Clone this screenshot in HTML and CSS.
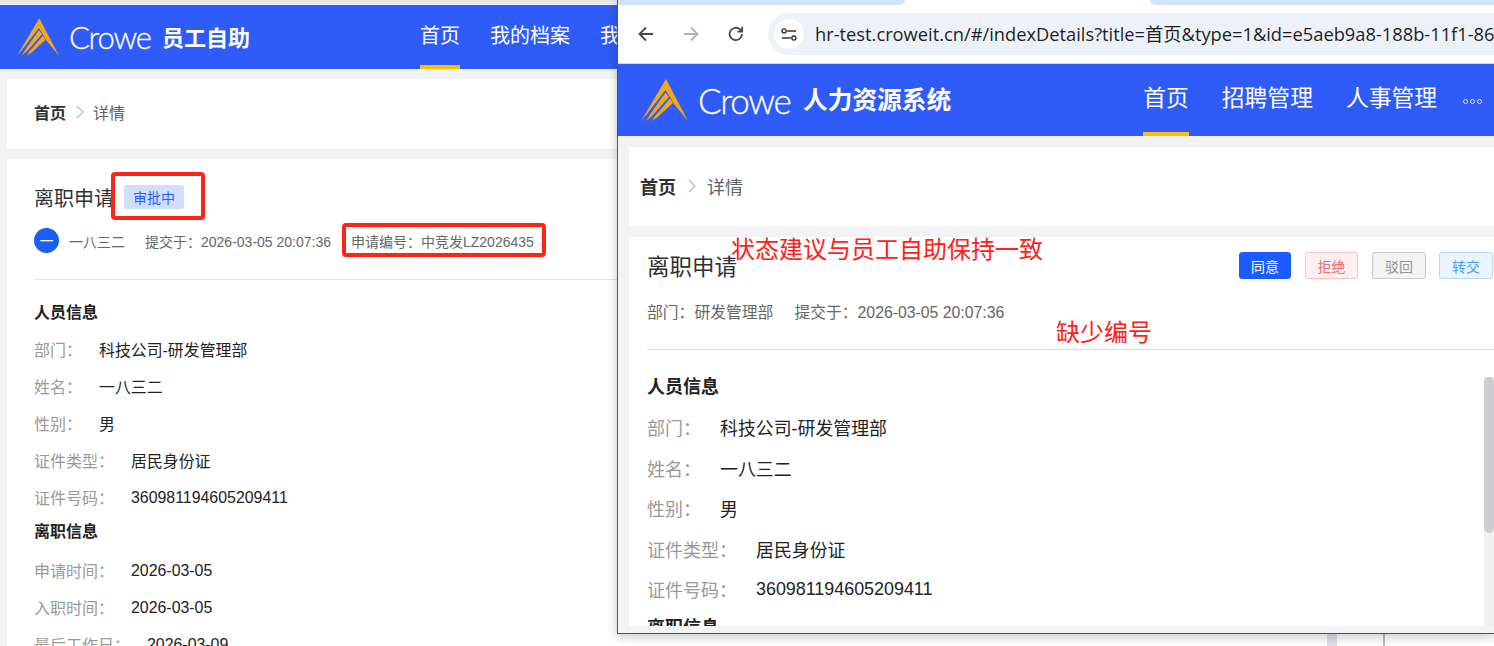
FILE: index.html
```html
<!DOCTYPE html>
<html lang="zh-CN">
<head>
<meta charset="utf-8">
<title>离职申请详情</title>
<link rel="stylesheet" href="styles.css">
</head>
<body>
<svg width="0" height="0" class="defs">
  <symbol id="crowe-mark" viewBox="0 0 47 42">
    <path fill="#f2a81d" d="M25 0 47 42 33 25 28 16.500 24.500 11 6 35 0 42Z"/>
    <path fill="#f2a81d" d="M24.500 13.500 28 18 11 37 5 42 9 35.500Z"/>
    <path fill="#f2a81d" d="M29 19.500 32 24 16 38.500 11 42 14 37Z"/>
  </symbol>
</svg>

<div class="desk">
  <section class="app">
    <div class="app-top"></div>
    <header class="nav">
      <div class="brand">
        <svg class="mark"><use href="#crowe-mark"/></svg>
        <span class="crowe">Crowe</span>
        <strong class="sys">员工自助</strong>
      </div>
      <nav class="menu">
        <a class="menu-item active">首页</a>
        <a class="menu-item">我的档案</a>
        <a class="menu-item">我的申请</a>
      </nav>
    </header>
    <main class="content">
      <div class="crumb-card">
        <b class="crumb-home">首页</b>
        <svg class="crumb-sep" viewBox="0 0 8 14"><path d="M1 1l6 6-6 6" fill="none" stroke="#b5b5b5" stroke-width="1.100"/></svg>
        <span class="crumb-cur">详情</span>
      </div>
      <article class="detail">
        <div class="title-row">
          <h1 class="title">离职申请</h1>
          <span class="badge">审批中</span>
        </div>
        <div class="meta-row">
          <span class="avatar">一</span>
          <span class="person">一八三二</span>
          <span class="meta">提交于：2026-03-05 20:07:36</span>
          <span class="meta">申请编号：中竞发LZ2026435</span>
        </div>
        <hr class="rule">
        <h2 class="sec">人员信息</h2>
        <div class="row"><span class="k">部门：</span><span class="v">科技公司-研发管理部</span></div>
        <div class="row"><span class="k">姓名：</span><span class="v">一八三二</span></div>
        <div class="row"><span class="k">性别：</span><span class="v">男</span></div>
        <div class="row"><span class="k">证件类型：</span><span class="v">居民身份证</span></div>
        <div class="row"><span class="k">证件号码：</span><span class="v">360981194605209411</span></div>
        <h2 class="sec sec-next">离职信息</h2>
        <div class="row"><span class="k">申请时间：</span><span class="v">2026-03-05</span></div>
        <div class="row"><span class="k">入职时间：</span><span class="v">2026-03-05</span></div>
        <div class="row"><span class="k">最后工作日：</span><span class="v">2026-03-09</span></div>
      </article>
    </main>
    <i class="mark-red mark-status"></i>
    <i class="mark-red mark-number"></i>
    <i class="peek-block"></i>
    <i class="peek-dash"></i>
  </section>

  <section class="window">
    <div class="tabstrip">
      <i class="tab tab-left"></i>
      <i class="tab tab-right"></i>
    </div>
    <div class="toolbar">
      <svg class="tb-icon" viewBox="0 0 20 20"><path d="M17 10H4M10 3.500 3.500 10l6.500 6.500" fill="none" stroke="#474747" stroke-width="1.800"/></svg>
      <svg class="tb-icon" viewBox="0 0 20 20"><path d="M3 10h13M10 3.500l6.500 6.500-6.500 6.500" fill="none" stroke="#b0b0b0" stroke-width="1.800"/></svg>
      <svg class="tb-icon" viewBox="0 0 20 20"><path d="M16 10a6.200 6.200 0 1 1-1.900-4.500L16 7.300M16.200 2.800v4.800h-4.800" fill="none" stroke="#474747" stroke-width="1.800"/></svg>
      <div class="omnibox">
        <span class="site-chip">
          <svg class="site-icon" viewBox="0 0 18 16"><path d="M7 4h10M1 12h10" fill="none" stroke="#333" stroke-width="1.700"/><circle cx="3.500" cy="4" r="2.300" fill="none" stroke="#333" stroke-width="1.600"/><circle cx="14.500" cy="12" r="2.300" fill="none" stroke="#333" stroke-width="1.600"/></svg>
        </span>
        <span class="url">hr-test.croweit.cn/#/indexDetails?title=首页&amp;type=1&amp;id=e5aeb9a8-188b-11f1-86</span>
      </div>
    </div>
    <header class="nav nav-lg">
      <div class="brand">
        <svg class="mark"><use href="#crowe-mark"/></svg>
        <span class="crowe">Crowe</span>
        <strong class="sys">人力资源系统</strong>
      </div>
      <nav class="menu">
        <a class="menu-item active">首页</a>
        <a class="menu-item">招聘管理</a>
        <a class="menu-item">人事管理</a>
        <span class="more"><i></i><i></i><i></i></span>
      </nav>
    </header>
    <main class="content content-lg">
      <div class="crumb-card">
        <b class="crumb-home">首页</b>
        <svg class="crumb-sep" viewBox="0 0 8 14"><path d="M1 1l6 6-6 6" fill="none" stroke="#b5b5b5" stroke-width="1.100"/></svg>
        <span class="crumb-cur">详情</span>
      </div>
      <article class="detail">
        <div class="title-row">
          <h1 class="title">离职申请</h1>
          <div class="actions">
            <button class="btn btn-ok">同意</button>
            <button class="btn btn-no">拒绝</button>
            <button class="btn btn-back">驳回</button>
            <button class="btn btn-pass">转交</button>
          </div>
        </div>
        <div class="meta-row">
          <span class="meta">部门：研发管理部</span>
          <span class="meta">提交于：2026-03-05 20:07:36</span>
        </div>
        <hr class="rule">
        <h2 class="sec">人员信息</h2>
        <div class="row"><span class="k">部门：</span><span class="v">科技公司-研发管理部</span></div>
        <div class="row"><span class="k">姓名：</span><span class="v">一八三二</span></div>
        <div class="row"><span class="k">性别：</span><span class="v">男</span></div>
        <div class="row"><span class="k">证件类型：</span><span class="v">居民身份证</span></div>
        <div class="row"><span class="k">证件号码：</span><span class="v">360981194605209411</span></div>
        <h2 class="sec sec-next">离职信息</h2>
        <div class="scrollbar"><i></i></div>
      </article>
    </main>
  </section>

  <p class="note note-status">状态建议与员工自助保持一致</p>
  <p class="note note-number">缺少编号</p>
</div>
</body>
</html>
```

FILE: styles.css
```css
* { box-sizing: border-box; }
html, body { margin: 0; height: 100%; overflow: hidden; background: #f2f3f5; }
body { font-family: "Liberation Sans", "Noto Sans CJK SC", sans-serif; color: #222; }
.defs { position: absolute; }
.desk { position: relative; width: 1494px; height: 646px; overflow: hidden; }

/* shared header */
.app { display: flex; flex-direction: column; height: 646px; }
.app-top { height: 5px; background: linear-gradient(#e4e4e4, #f0f0f0); }
.nav { display: flex; align-items: stretch; height: 64px; background: #2f5bf8; color: #fff; flex: none; box-shadow: 0 2px 5px rgba(0,0,0,.1); }
.brand { display: flex; align-items: center; padding-left: 17px; }
.mark { width: 42px; height: 38px; display: block; }
.crowe { font-family: Lato, sans-serif; font-weight: 300; font-size: 31px; letter-spacing: -1.200px; margin-left: 10px; width: 93px; -webkit-text-stroke: .3px #fff; }
.sys { font-family: "Noto Sans CJK SC", sans-serif; font-weight: 700; font-size: 22px; margin-top: -2px; }
.menu { display: flex; margin-left: 170px; gap: 30px; font-family: "Noto Sans CJK SC", sans-serif; font-size: 20px; white-space: nowrap; }
.menu-item { display: flex; align-items: center; border-bottom: 4px solid transparent; padding-bottom: 2px; }
.menu-item.active { border-bottom-color: #ffbf00; }

/* shared content */
.content { flex: 1; min-height: 0; padding: 10px 0 0 7px; display: flex; flex-direction: column; gap: 10px; background: #f2f3f5; font-family: "Noto Sans CJK SC", sans-serif; }
.crumb-card { flex: none; height: 70px; background: #fff; display: flex; align-items: center; padding: 0 0 4px 27px; font-size: 16px; }
.crumb-home { font-weight: 700; color: #303133; }
.crumb-sep { width: 8px; height: 14px; margin: 0 9.500px; }
.crumb-cur { color: #606266; }
.detail { position: relative; flex: 1; min-height: 0; overflow: hidden; background: #fff; padding: 21px 0 0 27px; }
.title-row { display: flex; align-items: center; height: 34px; }
.title { margin: 0; font-size: 20px; font-weight: 400; color: #303133; }
.badge { margin-left: 10px; width: 60px; height: 24px; border-radius: 3px; background: #d1deff; color: #1f5fff; font-size: 14px; line-height: 24px; text-align: center; }
.meta-row { display: flex; align-items: center; margin-top: 14px; height: 25px; white-space: nowrap; }
.avatar { width: 25px; height: 25px; border-radius: 50%; background: #1a5ffa; color: #fff; font-size: 14px; line-height: 25px; text-align: center; }
.person { margin-left: 10px; font-size: 14px; color: #666; }
.meta { font-family: "Liberation Sans", "Noto Sans CJK SC", sans-serif; font-size: 14px; color: #666; margin-left: 20px; }
.rule { margin: 26px 0 0; border: 0; border-top: 1px solid #e2e3e6; }
.sec { margin: 20px 0 0; height: 22px; font-size: 16px; line-height: 22px; font-weight: 700; color: #222; }
.sec-next { margin-top: 2.500px; }
.row { display: flex; align-items: center; height: 37px; font-size: 16px; white-space: nowrap; }
.sec + .row { margin-top: 9px; }
.sec-next + .row { margin-top: 12px; }
.k { color: #999; margin: 0 17px 2px 0; }
.v { font-family: "Liberation Sans", "Noto Sans CJK SC", sans-serif; font-size: 15.900px; color: #222; }

/* window in front */
.window { position: absolute; left: 617px; top: 0; right: 0; height: 634px; display: flex; flex-direction: column; background: #fff; border-left: 1px solid #555; border-bottom: 1px solid #555; box-shadow: 0 3px 10px rgba(0,0,0,.22); }
.tabstrip { position: relative; height: 5px; background: #fff; flex: none; }
.tab { position: absolute; top: 0; height: 5px; background: #d3e3fd; }
.tab-left { left: 0; width: 287px; border-radius: 0 0 8px 0; }
.tab-right { left: 532px; right: 0; border-radius: 0 0 0 8px; }
.toolbar { display: flex; align-items: center; height: 59px; flex: none; padding: 0 0 0 18px; border-bottom: 1px solid #d6d8dc; }
.tb-icon { width: 20px; height: 20px; margin-right: 25px; flex: none; }
.tb-icon:nth-child(3) { margin-right: 22px; }
.omnibox { flex: 1; min-width: 0; height: 42px; display: flex; align-items: center; padding-left: 6px; background: #edf2fa; border-radius: 21px 0 0 21px; overflow: hidden; }
.site-chip { width: 30px; height: 30px; border-radius: 50%; background: #fff; display: flex; align-items: center; justify-content: center; flex: none; }
.site-icon { width: 16px; height: 15px; }
.url { margin: -2px 0 0 11px; font-family: "Open Sans", "Noto Sans CJK SC", sans-serif; font-size: 18.300px; color: #1f1f1f; white-space: nowrap; }

.nav-lg { height: 72px; }
.nav-lg .brand { padding-left: 23px; }
.nav-lg .mark { width: 47px; height: 42px; }
.nav-lg .crowe { font-size: 35px; letter-spacing: -1.300px; margin-left: 10px; width: 105px; }
.nav-lg .sys { font-size: 24.700px; margin-top: -4px; }
.nav-lg .menu { margin-left: 192px; gap: 33px; font-size: 22.800px; }
.nav-lg .menu-item { padding-bottom: 3px; }
.more { display: flex; align-items: center; gap: 2px; margin-left: -7px; padding-top: 2px; }
.more i { width: 5px; height: 5px; border: 1.300px solid #dfe7ff; border-radius: 50%; }

.content-lg { padding: 11px 0 7px 11px; gap: 11px; }
.content-lg .crumb-card { height: 79px; padding: 0 0 2px 11px; font-size: 18px; }
.content-lg .crumb-sep { margin: 0 11.500px; }
.content-lg .detail { padding: 11px 0 0 18px; }
.content-lg .title { font-size: 22.500px; }
.actions { margin-left: auto; display: flex; gap: 14px; margin-top: 1px; padding-right: 1px; }
.btn { width: 53px; height: 27px; padding: 0; border: 1px solid; border-radius: 3px; font: 14px "Noto Sans CJK SC", sans-serif; }
.btn-ok { background: #1a5cff; border-color: #1a5cff; color: #fff; width: 52px; }
.btn-no { background: #fef0f0; border-color: #fbc4c4; color: #f56c6c; }
.btn-back { background: #f4f4f5; border-color: #c8c9cc; color: #909399; width: 54px; }
.btn-pass { background: #ecf5ff; border-color: #b3d8ff; color: #409eff; width: 54px; margin-left: -1px; }
.content-lg .meta-row { margin-top: 17px; height: 24px; }
.content-lg .meta { font-size: 15.800px; margin-left: 0; margin-right: 21px; }
.content-lg .rule { margin-top: 26px; }
.content-lg .sec { margin-top: 23px; height: 24px; font-size: 18px; line-height: 24px; }
.content-lg .sec-next { margin-top: 4px; }
.content-lg .row { height: 40.500px; font-size: 18px; }
.content-lg .sec + .row { margin-top: 10px; }
.content-lg .k { margin: 0 19px 0 0; }
.content-lg .v { font-size: 17.900px; }
.scrollbar { position: absolute; right: 0; top: 140px; bottom: 0; width: 10px; background: #f0f0f0; }
.scrollbar i { display: block; height: 156px; border-radius: 5px; background: #cdcdcf; }

/* things lying over the pictures */
.mark-red { position: absolute; border: 4px solid #ff2516; border-radius: 4px; }
.mark-status { left: 111px; top: 172px; width: 94px; height: 48px; }
.mark-number { left: 342px; top: 223px; width: 204px; height: 34px; }
.peek-block { position: absolute; left: 1327px; top: 634px; width: 10px; height: 12px; background: #dedfe8; }
.peek-dash { position: absolute; left: 1383px; top: 634px; height: 12px; border-left: 2px dashed #bbb; }
.note { position: absolute; margin: 0; color: #ff2018; font-family: "Noto Sans CJK SC", sans-serif; font-size: 24px; line-height: 32px; white-space: nowrap; }
.note-status { left: 731px; top: 232px; }
.note-number { left: 1056px; top: 315px; }
```
